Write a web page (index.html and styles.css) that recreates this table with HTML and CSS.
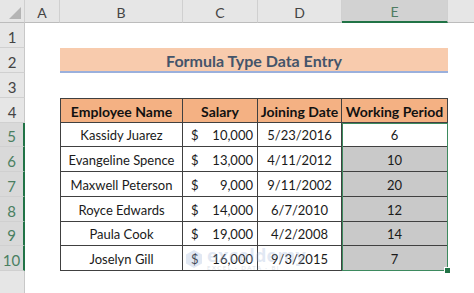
FILE: index.html
```html
<!DOCTYPE html>
<html>
<head>
<meta charset="utf-8">
<link rel="stylesheet" href="styles.css">
</head>
<body>
<div class="sheet">
  <div class="corner"><svg class="tri" width="12" height="12" viewBox="0 0 12 12"><polygon points="12,0 12,12 0,12" fill="#b4b4b4"/></svg></div>
  <div class="ch">A</div>
  <div class="ch">B</div>
  <div class="ch">C</div>
  <div class="ch">D</div>
  <div class="ch ch-sel">E</div>
  <div class="ch ch-last"></div>

  <div class="rh r1">1</div>
  <div class="rh r2">2</div>
  <div class="rh r3">3</div>
  <div class="rh r4">4</div>
  <div class="rh rh-sel r5">5</div>
  <div class="rh rh-sel r6">6</div>
  <div class="rh rh-sel r7">7</div>
  <div class="rh rh-sel r8">8</div>
  <div class="rh rh-sel r9">9</div>
  <div class="rh rh-sel r10">10</div>
  <div class="rh r11"></div>

  <div class="title">Formula Type Data Entry</div>

  <div class="tablewrap">
    <div class="data">
      <div class="th">Employee Name</div><div class="th">Salary</div><div class="th">Joining Date</div><div class="th">Working Period</div>

      <div class="td">Kassidy Juarez</div><div class="td money"><span>$</span><span>10,000</span></div><div class="td">5/23/2016</div><div class="td wp active">6</div>
      <div class="td">Evangeline Spence</div><div class="td money"><span>$</span><span>13,000</span></div><div class="td">4/11/2012</div><div class="td wp">10</div>
      <div class="td">Maxwell Peterson</div><div class="td money"><span>$</span><span>9,000</span></div><div class="td">9/11/2002</div><div class="td wp">20</div>
      <div class="td">Royce Edwards</div><div class="td money"><span>$</span><span>14,000</span></div><div class="td">6/7/2010</div><div class="td wp">12</div>
      <div class="td">Paula Cook</div><div class="td money"><span>$</span><span>19,000</span></div><div class="td">4/2/2008</div><div class="td wp">14</div>
      <div class="td">Joselyn Gill</div><div class="td money"><span>$</span><span>16,000</span></div><div class="td">9/3/2015</div><div class="td wp">7</div>
    </div>
    <div class="selection"><div class="handle"></div></div>
    <div class="watermark">
      <svg class="wm-logo" width="20" height="20" viewBox="0 0 20 20"><path d="M10 1 L18 5.5 L18 14.5 L10 19 L2 14.5 L2 5.5 Z" fill="#9fb4da"/></svg>
      <div class="wm-text"><span class="wm-name">exceldemy</span><span class="wm-sub">EXCEL · DATA · BI</span></div>
    </div>
  </div>
</div>
</body>
</html>
```

FILE: styles.css
```css
html, body {
  margin: 0;
  padding: 0;
  background: #ffffff;
}
body {
  width: 474px;
  height: 293px;
  overflow: hidden;
  font-family: Lato, "Liberation Sans", sans-serif;
}
.sheet {
  display: grid;
  grid-template-columns: 25px 35px 123px 75px 84px 106px 1fr;
  grid-template-rows: 23px 25px 25px 25px 25px 24px 25px 25px 25px 24px 25px 30px;
  height: 293px;
}
.corner {
  grid-column: 1;
  grid-row: 1;
  background: #e6e6e6;
  border-right: 1px solid #cfcfcf;
  border-bottom: 1px solid #bcbcbc;
  box-sizing: border-box;
  display: flex;
  align-items: flex-end;
  justify-content: flex-end;
  padding: 0 3px 3px 0;
}
.ch {
  grid-row: 1;
  background: #e6e6e6;
  border-right: 1px solid #d0d0d0;
  border-bottom: 1px solid #bcbcbc;
  box-sizing: border-box;
  display: flex;
  align-items: center;
  justify-content: center;
  font-size: 14px;
  color: #444444;
  padding-top: 2px;
}
.ch-sel {
  background: #d2d2d2;
  color: #4f7c63;
  border-bottom: 2px solid #217346;
}
.ch-last { border-right: none; }
.rh {
  grid-column: 1;
  background: #e6e6e6;
  border-right: 1px solid #c8c8c8;
  border-bottom: 1px solid #d0d0d0;
  box-sizing: border-box;
  display: flex;
  align-items: center;
  justify-content: center;
  font-size: 15px;
  color: #444444;
  padding-top: 3px;
}
.rh-sel {
  background: #d9d9d9;
  color: #4a7f61;
  border-right: 2px solid #217346;
}
.r1 { grid-row: 2; }
.r2 { grid-row: 3; }
.r3 { grid-row: 4; }
.r4 { grid-row: 5; }
.r5 { grid-row: 6; }
.r6 { grid-row: 7; }
.r7 { grid-row: 8; }
.r8 { grid-row: 9; }
.r9 { grid-row: 10; }
.r10 { grid-row: 11; }
.r11 { grid-row: 12; border-bottom: none; }

.title {
  grid-column: 3 / 7;
  grid-row: 3;
  background: #f8cbad;
  border-bottom: 2px solid #9bb0dc;
  color: #44546a;
  font-weight: 700;
  font-size: 16px;
  display: flex;
  align-items: center;
  justify-content: center;
  padding-top: 1px;
  box-sizing: border-box;
}

.tablewrap {
  grid-column: 3 / 7;
  grid-row: 5 / 12;
  position: relative;
}
.data {
  display: grid;
  grid-template-columns: 122px 75px 84px 106px;
  grid-template-rows: 24px 24px 25px 25px 25px 24px 25px;
  border-top: 1px solid #404040;
  border-left: 1px solid #404040;
  height: 100%;
  box-sizing: border-box;
  font-size: 13px;
  color: #1a1a1a;
}
.th, .td {
  border-right: 1px solid #404040;
  border-bottom: 1px solid #404040;
  display: flex;
  align-items: center;
  justify-content: center;
  white-space: nowrap;
  overflow: hidden;
  padding-top: 1px;
}
.th {
  background: #f4b183;
  font-weight: 700;
  font-size: 14px;
  color: #111111;
}
.money {
  justify-content: space-between;
  padding: 1px 4px 0 8px;
}
.wp { background: #c9c9c9; }
.wp.active { background: #ffffff; }

.selection {
  position: absolute;
  left: 282px;
  top: 25px;
  width: 106px;
  bottom: 0;
  border: 1px solid #3d8a5f;
  box-sizing: border-box;
  pointer-events: none;
}
.handle {
  position: absolute;
  right: -4px;
  bottom: -4px;
  width: 5px;
  height: 5px;
  background: #217346;
  border: 1px solid #ffffff;
}
.watermark {
  position: absolute;
  left: 124px;
  top: 148px;
  display: flex;
  align-items: center;
  gap: 3px;
  opacity: 0.3;
  pointer-events: none;
}
.wm-text {
  display: flex;
  flex-direction: column;
  line-height: 1;
}
.wm-name {
  font-family: "Open Sans", sans-serif;
  font-weight: 700;
  font-size: 18px;
  color: #9fb4da;
  letter-spacing: 0.3px;
}
.wm-sub {
  font-size: 6px;
  color: #9aa6bd;
  letter-spacing: 1.5px;
  margin-top: 1px;
}
```
